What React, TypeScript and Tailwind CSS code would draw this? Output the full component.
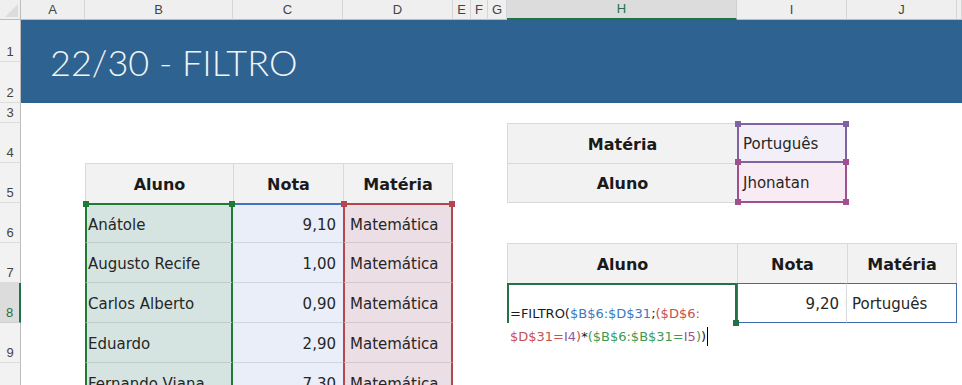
const data = [
  { aluno: "Anátole", nota: "9,10" },
  { aluno: "Augusto Recife", nota: "1,00" },
  { aluno: "Carlos Alberto", nota: "0,90" },
  { aluno: "Eduardo", nota: "2,90" },
  { aluno: "Fernando Viana", nota: "7,30" },
];

const rowStart = ["row-start-7", "row-start-8", "row-start-9", "row-start-10", "row-start-11"];
const letters = ["A", "B", "C", "D", "E", "F", "G", "H", "I", "J", ""];
const colStart = [
  "col-start-2", "col-start-3", "col-start-4", "col-start-5", "col-start-6", "col-start-7",
  "col-start-8", "col-start-9", "col-start-10", "col-start-11", "col-start-12",
];
const rowHeadStart = [
  "row-start-2", "row-start-3", "row-start-4", "row-start-5", "row-start-6",
  "row-start-7", "row-start-8", "row-start-9", "row-start-10", "row-start-11",
];

const colHead =
  "row-start-1 flex items-center justify-center bg-[#efefef] border-r border-b border-r-[#d6d6d6] border-b-[#bdbdbd] text-[13px] text-[#444]";
const rowHead =
  "col-start-1 flex items-end justify-center pb-[1px] bg-[#f2f2f2] border-r border-b border-r-[#bdbdbd] border-b-[#dcdcdc] text-[13px] leading-4 text-[#444]";
const grayHead =
  "flex items-center justify-center pt-[2px] bg-[#f2f2f2] border-t border-l border-[#d9d9d9] font-bold text-[16px] text-[#1a1a1a]";

const Handle = ({ pos, color }: { pos: string; color: string }) => (
  <span className={`absolute size-[6px] z-10 ${pos} ${color}`} />
);

export default function App() {
  return (
    <div className="h-[385px] w-[962px] overflow-hidden bg-white font-['DejaVu_Sans',sans-serif] text-[15px] text-[#262626]">
      <div className="grid grid-cols-[21px_64px_148px_110px_110px_18px_17px_19px_230px_110px_110px_1fr] grid-rows-[20px_42px_41px_20px_40px_40px_40px_40px_40px_40px_40px]">
        {/* corner */}
        <div className="col-start-1 row-start-1 relative bg-[#efefef] border-r border-b border-r-[#bdbdbd] border-b-[#bdbdbd]">
          <svg className="absolute right-[2px] bottom-[2px]" width="13" height="13" viewBox="0 0 13 13">
            <polygon points="13,0 13,13 0,13" fill="#dcdcdc" />
          </svg>
        </div>

        {/* column headers */}
        {letters.map((l, i) =>
          l === "H" ? (
            <div
              key={l}
              className={`${colStart[i]} row-start-1 flex items-center justify-center bg-[#dcdcdc] border-r border-r-[#d0d0d0] border-b-2 border-b-[#217346] text-[13px] text-[#217346] font-['Liberation_Sans',sans-serif]`}
            >
              {l}
            </div>
          ) : (
            <div key={i} className={`${colStart[i]} ${colHead} font-['Liberation_Sans',sans-serif]`}>
              {l}
            </div>
          )
        )}

        {/* row headers */}
        {rowHeadStart.map((r, i) =>
          i === 7 ? (
            <div
              key={r}
              className={`${r} col-start-1 flex items-end justify-center pb-[1px] bg-[#dcdcdc] border-r-2 border-r-[#217346] border-b border-b-[#d0d0d0] text-[13px] leading-4 text-[#217346] font-['Liberation_Sans',sans-serif]`}
            >
              {i + 1}
            </div>
          ) : (
            <div key={r} className={`${r} ${rowHead} font-['Liberation_Sans',sans-serif]`}>
              {i + 1}
            </div>
          )
        )}

        {/* banner */}
        <div className="col-start-2 col-span-11 row-start-2 row-span-2 flex items-center bg-[#2d6291] pl-[29px]">
          <h1 className="font-['Lato',sans-serif] font-light text-[36px] leading-none text-[#f3f3f3] pt-[1px]">
            22/30 - FILTRO
          </h1>
        </div>

        {/* table 1 header */}
        <div className={`col-start-3 row-start-6 ${grayHead}`}>Aluno</div>
        <div className={`col-start-4 row-start-6 ${grayHead}`}>Nota</div>
        <div className={`col-start-5 row-start-6 border-r ${grayHead}`}>Matéria</div>

        {/* table 1 data */}
        {data.map((d, i) => (
          <div key={d.aluno} className="contents">
            <div
              className={`${rowStart[i]} col-start-3 relative flex items-center pl-[1px] pt-[3px] bg-[#d5e4e1] border-x-2 border-x-[#1e7b34] border-b border-b-black/10 ${
                i === 0 ? "border-t-2 border-t-[#1e7b34]" : ""
              }`}
            >
              {i === 0 && (
                <>
                  <Handle pos="-left-[4px] -top-[4px]" color="bg-[#1e7b34]" />
                  <Handle pos="-right-[4px] -top-[4px]" color="bg-[#1e7b34]" />
                </>
              )}
              <span className="whitespace-nowrap">{d.aluno}</span>
            </div>
            <div
              className={`${rowStart[i]} col-start-4 flex items-center justify-end pr-[7px] pt-[3px] bg-[#e9eef8] border-b border-b-black/10 ${
                i === 0 ? "border-t-2 border-t-[#4472c4]" : ""
              }`}
            >
              {d.nota}
            </div>
            <div
              className={`${rowStart[i]} col-start-5 relative flex items-center pl-[5px] pt-[3px] bg-[#ecdee5] border-x-2 border-x-[#b44650] border-b border-b-black/10 ${
                i === 0 ? "border-t-2 border-t-[#b44650]" : ""
              }`}
            >
              {i === 0 && (
                <>
                  <Handle pos="-left-[4px] -top-[4px]" color="bg-[#b44650]" />
                  <Handle pos="-right-[4px] -top-[4px]" color="bg-[#b44650]" />
                </>
              )}
              Matemática
            </div>
          </div>
        ))}

        {/* criteria */}
        <div className={`col-start-9 row-start-5 ${grayHead}`}>Matéria</div>
        <div className={`col-start-9 row-start-6 border-b ${grayHead}`}>Aluno</div>
        <div className="col-start-10 row-start-5 relative flex items-center pl-[4px] pt-[2px] bg-[#f3eff8] border-2 border-[#8064a2]">
          <Handle pos="-left-[4px] -top-[4px]" color="bg-[#8064a2]" />
          <Handle pos="-right-[4px] -top-[4px]" color="bg-[#8064a2]" />
          Português
        </div>
        <div className="col-start-10 row-start-6 relative flex items-center pl-[4px] pt-[2px] bg-[#f9ebf3] border-x-2 border-b-2 border-[#a0508f]">
          <Handle pos="-left-[4px] -top-[4px]" color="bg-[#a0508f]" />
          <Handle pos="-right-[4px] -top-[4px]" color="bg-[#a0508f]" />
          <Handle pos="-left-[4px] -bottom-[4px]" color="bg-[#a0508f]" />
          <Handle pos="-right-[4px] -bottom-[4px]" color="bg-[#a0508f]" />
          Jhonatan
        </div>

        {/* result header */}
        <div className={`col-start-9 row-start-8 ${grayHead}`}>Aluno</div>
        <div className={`col-start-10 row-start-8 ${grayHead}`}>Nota</div>
        <div className={`col-start-11 row-start-8 border-r ${grayHead}`}>Matéria</div>

        {/* formula cell */}
        <div className="col-start-9 row-start-9 relative z-10 bg-white border-x-2 border-t-2 border-[#217346] pl-[1px] pt-[17px]">
          <Handle pos="-right-[4px] -bottom-[3px]" color="bg-[#217346]" />
          <div className="text-[13px] leading-[23px] whitespace-nowrap">
            <div>
              <span className="text-[#1a1a1a]">=FILTRO(</span>
              <span className="text-[#3d78c2]">$B$6:$D$31</span>
              <span className="text-[#1a1a1a]">;</span>
              <span className="text-[#c8504f]">($D$6:</span>
            </div>
            <div className="bg-white w-fit pr-[2px] flex items-center">
              <span className="text-[#c8504f]">$D$31=</span>
              <span className="text-[#8a5aa8]">I4</span>
              <span className="text-[#c8504f]">)</span>
              <span className="text-[#1a1a1a]">*</span>
              <span className="text-[#3c9a55]">($B$6:$B$31=</span>
              <span className="text-[#a0508f]">I5</span>
              <span className="text-[#3c9a55]">)</span>
              <span className="text-[#1a1a1a]">)</span>
              <span className="ml-[1px] h-[19px] border-l border-black" />
            </div>
          </div>
        </div>
        <div className="col-start-10 row-start-9 flex items-center justify-end pr-[7px] pt-[2px] border-y-[1.5px] border-l-[1.5px] border-[#3c6bb0] border-r border-r-[#d9d9d9]">
          9,20
        </div>
        <div className="col-start-11 row-start-9 flex items-center pl-[5px] pt-[2px] border-y-[1.5px] border-r-[1.5px] border-[#3c6bb0]">
          Português
        </div>
      </div>
    </div>
  );
}
